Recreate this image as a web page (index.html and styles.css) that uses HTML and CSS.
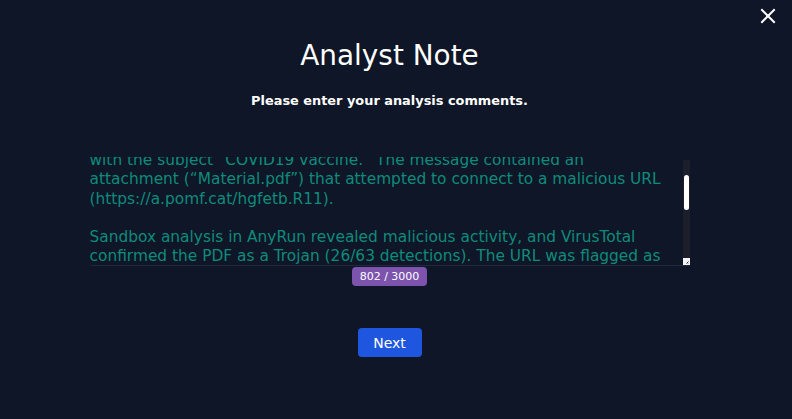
FILE: index.html
```html
<!DOCTYPE html>
<html lang="en">
<head>
<meta charset="utf-8">
<title>Analyst Note</title>
<link rel="stylesheet" href="styles.css">
</head>
<body>
<button class="close" aria-label="Close">
  <svg width="16" height="16" viewBox="0 0 16 16"><path d="M2 2 L14 14 M14 2 L2 14" stroke="#ffffff" stroke-width="2" stroke-linecap="square" fill="none"/></svg>
</button>
<main class="modal">
  <h1 class="title">Analyst Note</h1>
  <p class="subtitle">Please enter your analysis comments.</p>
  <div class="field">
    <div class="box">
      <textarea class="note" id="note">A phishing email was reported by a finance employee on 12 March,
with the subject “COVID19 vaccine.” The message contained an
attachment (“Material.pdf”) that attempted to connect to a malicious URL (https://a.pomf.cat/hgfetb.R11).

Sandbox analysis in AnyRun revealed malicious activity, and VirusTotal confirmed the PDF as a Trojan (26/63 detections). The URL was flagged as malicious by several vendors and is associated with malware delivery. The sender address was spoofed and failed SPF and DKIM checks.

The user opened the attachment, but the endpoint protection blocked the outbound connection. The host was isolated and scanned, and no persistence was found.</textarea>
      <div class="track" aria-hidden="true">
        <div class="thumb"></div>
        <div class="grip">
          <svg width="7" height="7" viewBox="0 0 7 7"><path d="M5.5 3.5 L3.5 5.5 M5.5 5 L5 5.5" stroke="#3a3f4d" stroke-width="1" fill="none"/></svg>
        </div>
      </div>
    </div>
    <span class="count">802 / 3000</span>
  </div>
  <button class="next">Next</button>
</main>
<script src="script.js"></script>
</body>
</html>
```
FILE: styles.css
```css
* { box-sizing: border-box; }
html, body { margin: 0; height: 100%; }
body {
  background: #0e1627;
  color: #ffffff;
  font-family: "DejaVu Sans", sans-serif;
  padding-right: 13px;
  overflow: hidden;
}
.close {
  position: absolute;
  top: 8px;
  right: 16px;
  width: 16px;
  height: 16px;
  padding: 0;
  border: 0;
  background: none;
  cursor: pointer;
}
.close svg { display: block; }
.modal {
  display: flex;
  flex-direction: column;
  align-items: center;
  padding-top: 38px;
}
.title {
  margin: 0;
  font-size: 27.9px;
  font-weight: 500;
  line-height: 36px;
}
.subtitle {
  margin: 19px 0 0;
  font-size: 12.9px;
  font-weight: 700;
  line-height: 16px;
}
.field {
  margin-top: 48px;
  width: 600px;
  display: flex;
  flex-direction: column;
  align-items: center;
}
.box {
  position: relative;
  width: 600px;
}
.note {
  display: block;
  width: 600px;
  height: 109px;
  margin: 0;
  padding: 0 7px 0 0;
  border: 0;
  border-bottom: 1px solid #1f2a3d;
  background: transparent;
  color: #0f8b7b;
  font-family: "DejaVu Sans", sans-serif;
  font-size: 15.4px;
  line-height: 19.2px;
  resize: none;
  outline: none;
  overflow: hidden;
  scrollbar-width: none;
}
.track {
  position: absolute;
  top: 3px;
  right: 0;
  width: 7px;
  height: 105px;
  background: #1d1e2c;
}
.thumb {
  position: absolute;
  top: 15px;
  left: 1px;
  width: 5px;
  height: 35px;
  border-radius: 3px;
  background: #ffffff;
}
.grip {
  position: absolute;
  bottom: 0;
  left: 0;
  width: 7px;
  height: 7px;
  background: #f4f4f6;
}
.grip svg { display: block; }
.count {
  margin-top: 1px;
  padding: 3px 8px;
  border-radius: 4px;
  background: #7c53ad;
  color: #ffffff;
  font-size: 11px;
  line-height: 13px;
}
.next {
  margin-top: 42px;
  width: 64px;
  height: 29px;
  border: 0;
  border-radius: 4px;
  background: #1f56e0;
  color: #ffffff;
  font-family: "DejaVu Sans", sans-serif;
  font-size: 14px;
  font-weight: 500;
  cursor: pointer;
}
```
FILE: script.js
```js
document.getElementById('note').scrollTop = 25;
```
